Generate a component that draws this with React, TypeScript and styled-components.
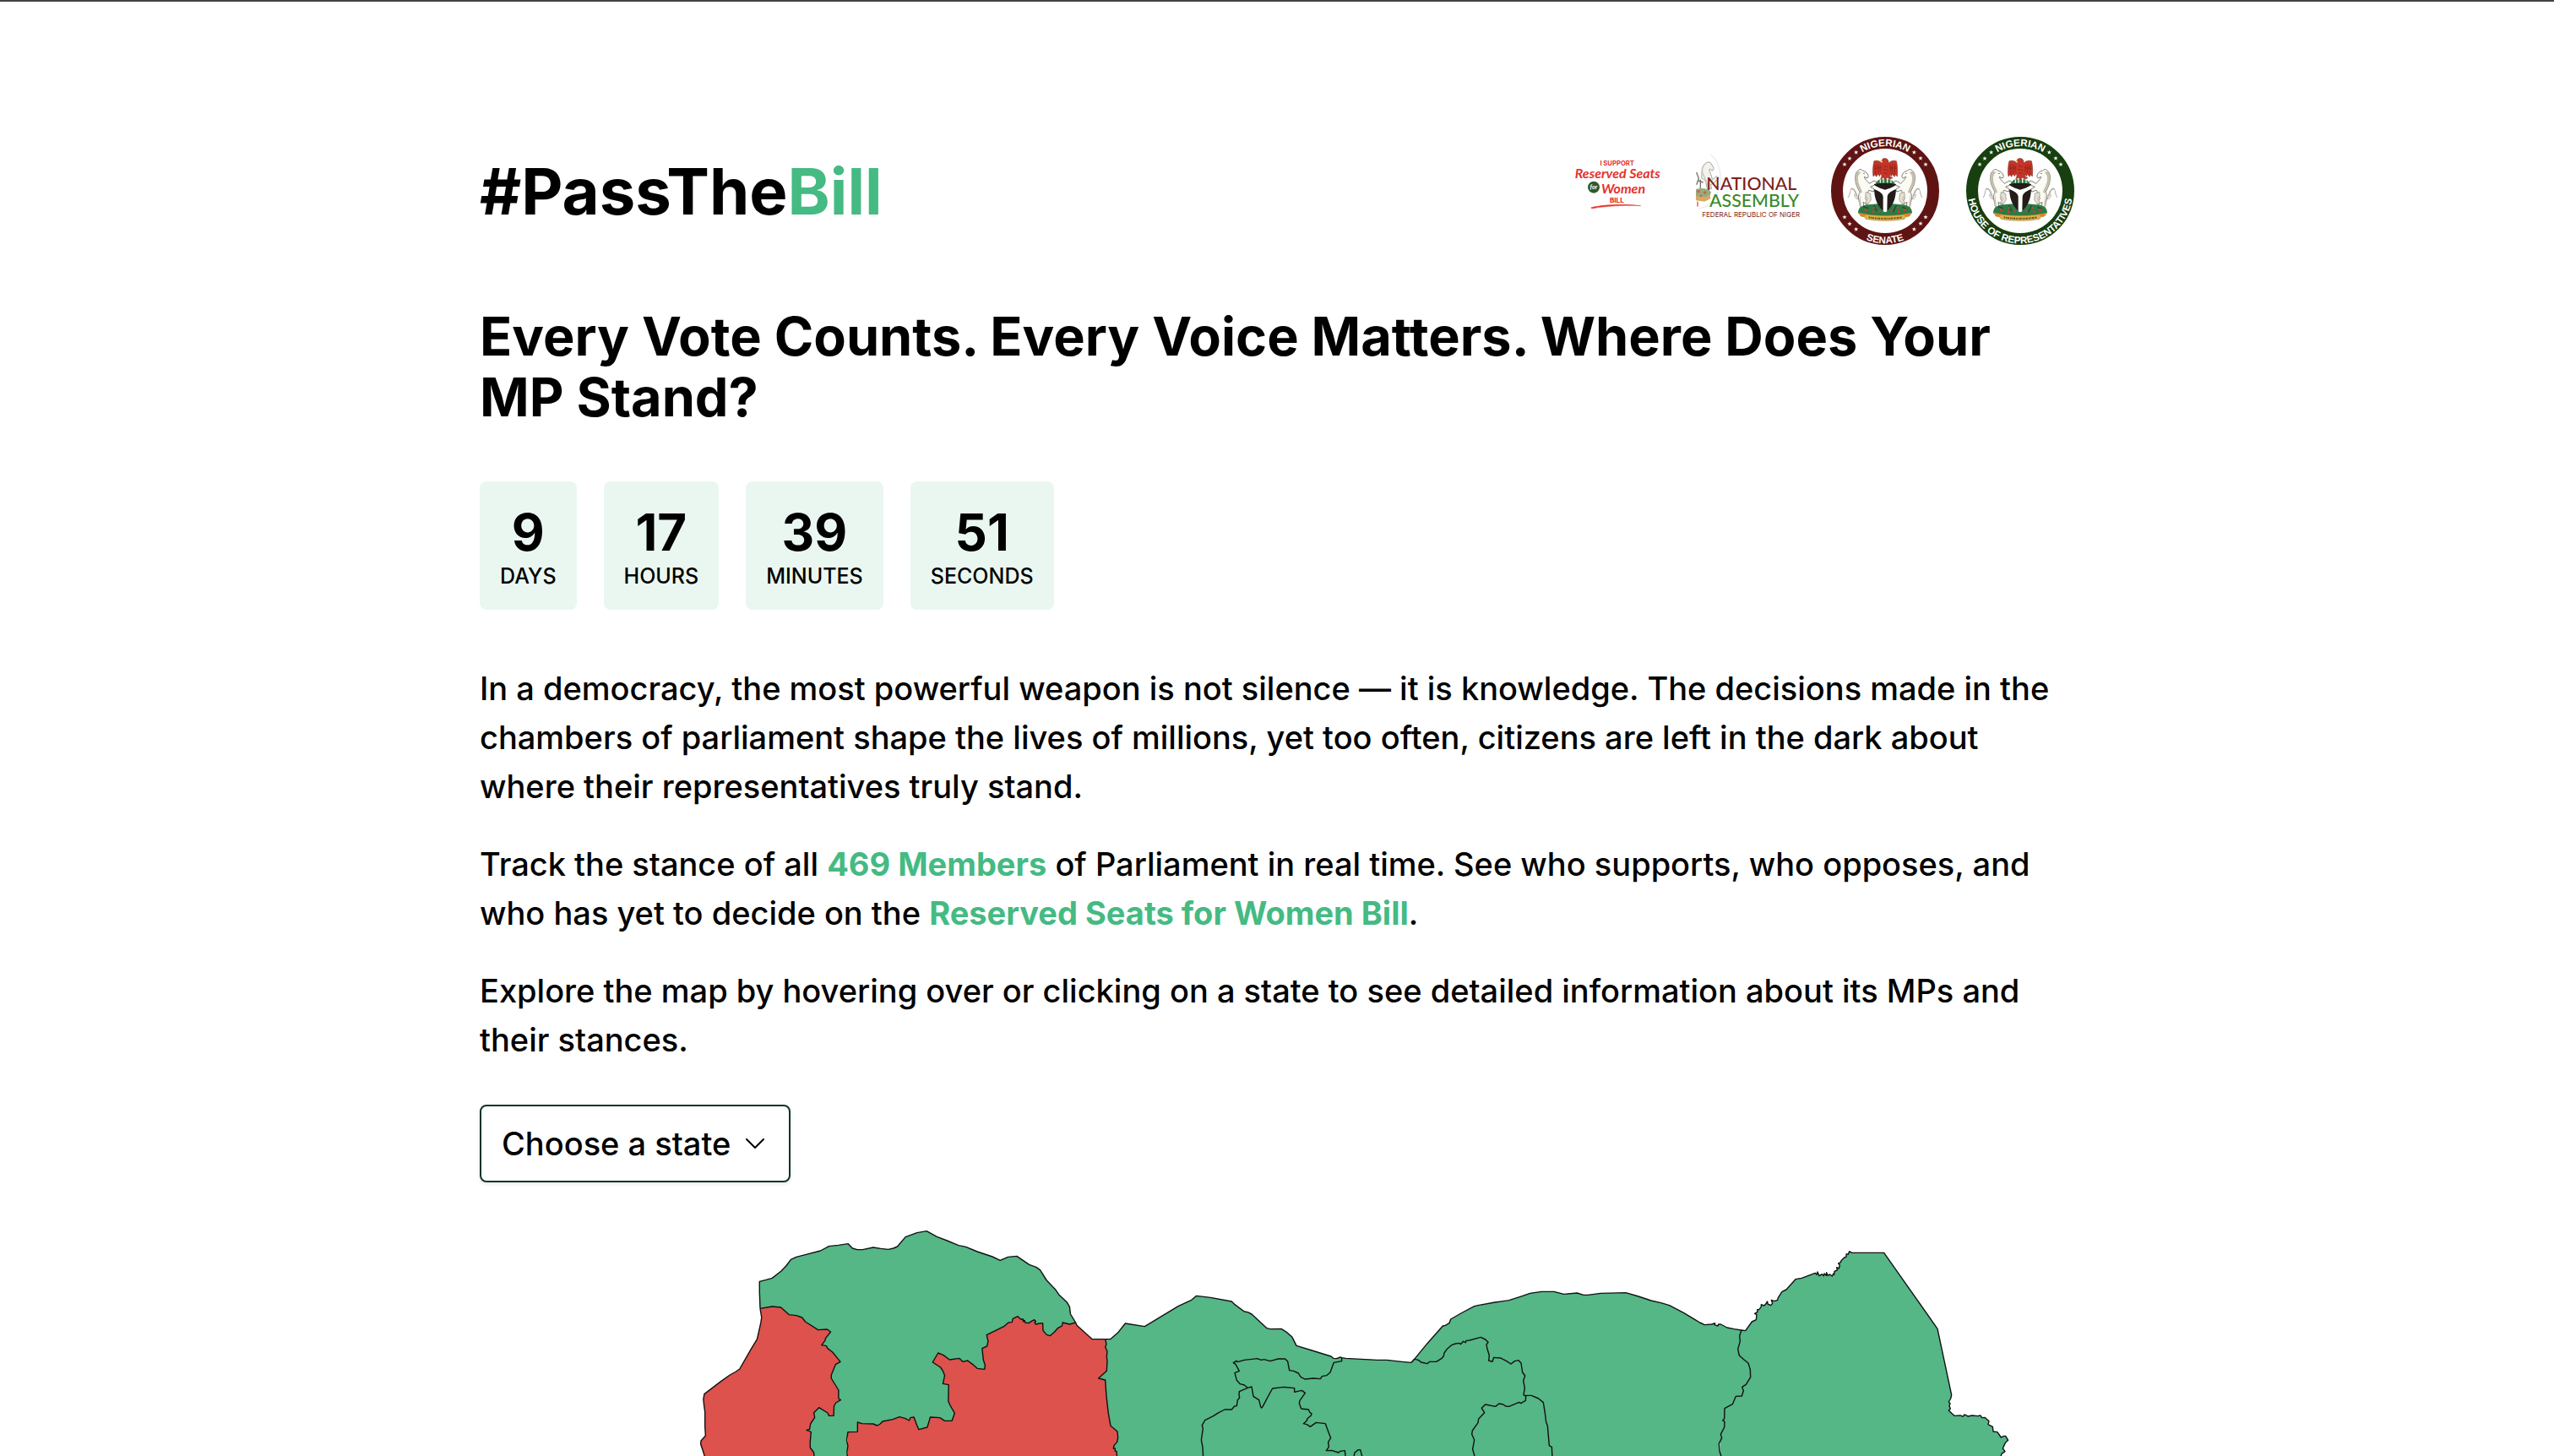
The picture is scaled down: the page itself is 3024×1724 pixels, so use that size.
import React from "react";
import styled, { createGlobalStyle } from "styled-components";

const GREEN = "#45ba83";
const MAP_GREEN = "#55b686";
const MAP_RED = "#dd524c";

const GlobalStyle = createGlobalStyle`
  *, *::before, *::after { box-sizing: border-box; }
  body {
    margin: 0;
    background: #fff;
    color: #000;
    font-family: Inter, "Open Sans", sans-serif;
  }
  h1, h2, p, dl, dt, dd { margin: 0; }
`;

const Page = styled.div`
  border-top: 2px solid #444142;
`;

const Container = styled.main`
  max-width: 2048px;
  margin: 0 auto;
  padding: 160px 80px 0;
`;

const Header = styled.header`
  display: flex;
  align-items: center;
  justify-content: space-between;
  gap: 32px;
`;

const Brand = styled.h1`
  font-size: 76px;
  line-height: 88px;
  font-weight: 700;
`;

const Accent = styled.span`
  color: ${GREEN};
`;

const Logos = styled.div`
  display: flex;
  gap: 32px;
`;

const Logo = styled.svg`
  display: block;
  width: 128px;
  height: 128px;
`;

const Headline = styled.h2`
  margin-top: 72px;
  font-size: 63px;
  line-height: 72px;
  font-weight: 700;
`;

const Countdown = styled.dl`
  display: flex;
  gap: 32px;
  margin-top: 64px;
`;

const Unit = styled.div`
  display: flex;
  flex-direction: column-reverse;
  align-items: center;
  padding: 24px;
  border-radius: 8px;
  background: #eaf7f1;
`;

const UnitValue = styled.dd`
  font-size: 60px;
  line-height: 72px;
  font-weight: 700;
`;

const UnitLabel = styled.dt`
  font-size: 25px;
  line-height: 32px;
  font-weight: 500;
  text-transform: uppercase;
`;

const Copy = styled.section`
  display: flex;
  flex-direction: column;
  gap: 34px;
  margin-top: 64px;
`;

const Paragraph = styled.p`
  font-size: 38px;
  line-height: 58px;
  font-weight: 500;
`;

const Strong = styled.strong`
  color: ${GREEN};
  font-weight: 700;
`;

const SelectBox = styled.div`
  position: relative;
  width: max-content;
  margin-top: 48px;
`;

const Select = styled.select`
  appearance: none;
  display: block;
  height: 92px;
  padding: 0 68px 0 24px;
  border: 2px solid #11332a;
  border-radius: 8px;
  background: #fff;
  box-shadow: 0 2px 4px rgba(0, 0, 0, 0.1);
  color: #000;
  font-family: inherit;
  font-size: 38px;
  font-weight: 500;
`;

const Chevron = styled.svg`
  position: absolute;
  top: 30px;
  right: 26px;
  width: 32px;
  height: 32px;
  pointer-events: none;
`;

const MapDrawing = styled.svg`
  display: block;
  width: 100%;
  margin-top: 40px;

  path {
    stroke: none;
  }
  path.border {
    fill: none;
    stroke: #111;
    stroke-width: 1.4;
    stroke-linejoin: round;
    vector-effect: non-scaling-stroke;
  }
`;

function Star({ x, y }: { x: number; y: number }) {
  return (
    <path
      transform={`translate(${x} ${y})`}
      fill="#fff"
      d="M0-8L2-2.6 8-2.4 3.200 1.300 5 7 0 3.600-5 7-3.200 1.300-8-2.400-2-2.600Z"
    />
  );
}

function Horse() {
  return (
    <g>
      <path
        d="M151 287C136 270 142 250 126 252C119 256 124 268 114 282M151 285C144 290 136 280 138 270M148 278C142 262 138 246 124 250"
        fill="none"
        stroke="#aaa699"
        strokeWidth="3"
      />
      <path
        d="M146 190C152 182 160 178 166 186C176 188 184 194 187 206L183 213L172 208C174 218 184 224 190 232L207 222L216 226L212 236L194 244L208 252L205 261L188 256C184 268 178 276 176 286L186 298L183 308L168 298L173 328L160 333L155 298C149 286 151 272 156 262C149 248 141 236 140 218C139 206 141 196 146 190Z"
        fill="#fbfaf5"
        stroke="#6f6b60"
        strokeWidth="2.600"
      />
      <path
        d="M150 188C139 198 137 214 143 232C148 244 155 252 159 268L165 262C160 246 150 234 150 216C148 206 154 198 160 192ZM158 270C157 286 161 304 164 329L158 329C155 304 152 288 158 270Z"
        fill="#c4bfab"
      />
      <path
        d="M178 262L194 268L196 290L186 304L176 300L184 286L176 276Z"
        fill="#e5e0cf"
        stroke="#8d8979"
        strokeWidth="2"
      />
      <circle cx="171" cy="196" r="2" fill="#222" />
    </g>
  );
}

function CoatOfArms() {
  return (
    <g>
      <Horse />
      <g transform="translate(492 0) scale(-1 1)">
        <Horse />
      </g>
      <path
        d="M150 336C150 314 170 306 196 306C230 302 262 302 296 306C322 306 342 314 342 336C326 346 300 350 246 350C192 350 166 346 150 336Z"
        fill="#2c7a45"
      />
      <path d="M168 314L186 320M206 310L216 330M286 310L274 334M308 316L322 322" stroke="#174f2b" strokeWidth="4" />
      <g fill="#d8392c">
        <circle cx="178" cy="326" r="5" />
        <circle cx="206" cy="318" r="4" />
        <circle cx="204" cy="332" r="4" />
        <circle cx="226" cy="330" r="4" />
        <circle cx="268" cy="330" r="4" />
        <circle cx="290" cy="318" r="4" />
        <circle cx="294" cy="332" r="4" />
        <circle cx="316" cy="326" r="5" />
      </g>
      <path
        d="M152 336L184 342C220 347 272 347 308 342L340 336L332 348L320 350L314 358C276 366 216 366 178 358L172 350L160 348Z"
        fill="#e0b24a"
        stroke="#8a6a1c"
        strokeWidth="1.500"
      />
      <path d="M152 336L180 341L172 350L160 348ZM340 336L312 341L320 350L332 348Z" fill="#d9862c" />
      <path d="M188 352C226 358 268 358 306 352" fill="none" stroke="#6f4f18" strokeWidth="6" strokeDasharray="5 2 3 2 7 3" />
      <path
        d="M218 224C222 216 236 218 246 214C256 218 270 216 274 224L280 234H212Z"
        fill="#2f7d46"
      />
      <path d="M229 218V230M240 216V230M254 216V230M267 218V230" stroke="#f4f1e6" strokeWidth="4" />
      <path
        d="M207 234Q246 226 285 234C286 268 282 310 246 334C210 310 206 268 207 234Z"
        fill="#231c18"
      />
      <path
        d="M207 237C222 248 240 252 246 254C252 252 270 248 285 237L285 252C270 258 257 264 254 278L253 331L246 334L239 331L239 278C236 264 222 258 207 252Z"
        fill="#fff"
      />
      <path
        d="M236 146C242 140 254 141 257 150L259 160C264 152 276 148 286 152C290 166 291 188 289 207L283 200L279 208L272 199L268 206L262 196L264 208L273 212L262 216L254 211L246 217L240 211L230 216L234 206L232 195L226 206L221 198L215 208L210 200L204 207C201 188 203 166 207 152C217 148 229 152 234 160L239 154L233 152Z"
        fill="#c53528"
        stroke="#71180f"
        strokeWidth="1.500"
      />
      <path
        d="M212 164L213 200M220 164L222 196M228 166L229 190M281 164L279 200M273 164L270 196M265 166L264 190M207 178L232 176M286 178L261 176M240 170L254 172M238 182L256 184M240 194L254 196"
        stroke="#7d1c12"
        strokeWidth="2"
        fill="none"
      />
      <path d="M236 149L228 152L237 155Z" fill="#e4b33c" />
    </g>
  );
}

type SealProps = { id: string; title: string; colour: string; lower: string; lowerStars: boolean };

function Seal({ id, title, colour, lower, lowerStars }: SealProps) {
  return (
    <Logo viewBox="54 66 384 384" role="img" aria-label={title}>
      <defs>
        <path id={`${id}-top`} d="M87 258A159 159 0 0 1 405 258" />
        <path id={`${id}-low`} d="M62.500 225A186.500 186.500 0 1 0 429.500 225" />
      </defs>
      <circle cx="246" cy="258" r="171" fill="#fff" stroke={colour} strokeWidth="42" />
      <g
        fill="#fff"
        fontFamily="Liberation Sans, sans-serif"
        fontSize="35"
        fontWeight="700"
        textAnchor="middle"
      >
        <text>
          <textPath href={`#${id}-top`} startOffset="50%">
            NIGERIAN
          </textPath>
        </text>
        <text>
          <textPath href={`#${id}-low`} startOffset="50%">
            {lower}
          </textPath>
        </text>
      </g>
      <Star x={102} y={164} />
      <Star x={120} y={143} />
      <Star x={143} y={121} />
      <Star x={349} y={121} />
      <Star x={372} y={142} />
      <Star x={390} y={164} />
      {lowerStars && (
        <g>
          <Star x={102} y={351} />
          <Star x={120} y={375} />
          <Star x={143} y={394} />
          <Star x={349} y={394} />
          <Star x={372} y={374} />
          <Star x={390} y={351} />
        </g>
      )}
      <CoatOfArms />
    </Logo>
  );
}

function SupportLogo() {
  return (
    <Logo viewBox="24 66 384 384" role="img" aria-label="I support Reserved Seats for Women Bill">
      <g fill="#e5322b" textAnchor="middle">
        <text x="224" y="167" fontFamily="Inter, sans-serif" fontWeight="700" fontSize="23">
          I SUPPORT
        </text>
        <text x="226" y="214" fontFamily="Lato, sans-serif" fontStyle="italic" fontWeight="700" fontSize="48">
          Reserved Seats
        </text>
        <text x="246" y="266" fontFamily="Lato, sans-serif" fontStyle="italic" fontWeight="700" fontSize="48">
          Women
        </text>
        <text x="223" y="299" fontFamily="Inter, sans-serif" fontWeight="800" fontSize="24">
          BILL
        </text>
        <path d="M132 317C180 306 250 304 308 311C250 308 180 312 134 321Z" stroke="#e5322b" strokeWidth="1.500" />
      </g>
      <circle cx="141" cy="245" r="21" fill="#2f5a2c" />
      <text
        x="141"
        y="252"
        fill="#fff"
        fontFamily="Lato, sans-serif"
        fontStyle="italic"
        fontWeight="700"
        fontSize="22"
        textAnchor="middle"
      >
        for
      </text>
    </Logo>
  );
}

function AssemblyLogo() {
  return (
    <Logo viewBox="504 66 384 384" role="img" aria-label="National Assembly, Federal Republic of Nigeria">
      <defs>
        <clipPath id="assembly-clip">
          <rect x="504" y="66" width="369" height="384" />
        </clipPath>
      </defs>
      <path d="M556 128C606 166 606 276 540 314L512 322" fill="none" stroke="#ececec" strokeWidth="4" />
      <path
        d="M526 178C532 160 546 152 556 158L568 178L564 186L552 180C550 192 562 202 562 218L578 206L586 212L566 232L556 236L560 250H544L538 222L524 212Z"
        fill="#f3f2ec"
        stroke="#a9a79d"
        strokeWidth="3"
      />
      <path d="M540 160C524 172 522 192 534 208C538 220 546 232 548 250" fill="none" stroke="#c9c7ba" strokeWidth="4" />
      <path d="M506 192L514 214L506 236M520 218V250M512 222L530 228" fill="none" stroke="#77756b" strokeWidth="4" />
      <path d="M504 252C524 246 548 250 558 262L552 282L534 294L504 290Z" fill="#93ad7c" />
      <path d="M504 276L540 280L552 270L556 286L534 296L504 292Z" fill="#d8a964" />
      <g fill="#d65a4a">
        <circle cx="513" cy="260" r="5" />
        <circle cx="536" cy="264" r="5" />
        <circle cx="522" cy="276" r="4" />
        <rect x="508" y="296" width="4" height="18" />
      </g>
      <g fontFamily="Lato, sans-serif" fill="#7d1f1b">
        <text x="541" y="254" fontSize="64" fontWeight="500">
          NATIONAL
        </text>
        <text x="552" y="315" fontSize="64" fontWeight="500" fill="#3a8a2b">
          ASSEMBLY
        </text>
        <text x="526" y="350" fontSize="24" fontFamily="Inter, sans-serif" clipPath="url(#assembly-clip)">
          FEDERAL REPUBLIC OF NIGERIA
        </text>
      </g>
    </Logo>
  );
}

const KEBBI_WEST =
  "M280 358L285 390 282 410 270 467 250 502 212 573 200 582 180 594 150 617 95 662 92 680 94 702 97 725 97 775 99 810 84 828 83 840 90 862 98 890";
const SOKOTO_NORTH =
  "M280 358L278 300 278 262 300 256 320 250 350 225 366 207 382 184 400 175 430 167 480 153 508 137 540 133 572 128 586 144 602 149 620 149 655 141 680 145 705 148 722 144 735 138 762 104 800 89 832 83 866 103 900 117 938 134 962 139 1000 156 1050 174 1076 187 1102 175 1131 172 1172 202 1195 211 1208 221 1230 258 1260 292 1270 308 1298 337 1306 352 1309 378 1326 408";
const SOKOTO_ZAMFARA =
  "L1306 414 1283 408 1281 420 1268 427 1254 443 1241 455 1230 451 1218 436 1217 410 1208 411 1194 414 1190 408 1194 404 1189 398 1180 403 1170 410 1158 408 1157 400 1152 404 1152 396 1144 396 1134 386 1118 394 1115 407 1103 408 1088 422 1031 452 1036 475 1032 492 1016 500 1020 540 1026 560 1024 574 1000 571 984 556 968 543 952 547 940 535 908 540 888 524 870 516 852 549 878 567 886 580 892 596 886 625 905 629 904 688 910 702 925 730 916 757 892 757 876 746 844 744 840 760 834 780 806 788 798 768 790 744 778 746 774 756 760 748 742 743 720 752 686 759 678 768 668 774 655 768 618 767 603 762 603 796 571 797 567 826 571 846 568 868 570 890";
const SOKOTO_KEBBI =
  "L458 870 446 852 446 830 449 797 440 792 434 790 444 787 447 768 461 745 458 728 475 710 504 729 508 739 524 739 525 705 531 693 547 683 540 678 540 648 516 606 516 594 530 557 546 547 520 513 503 499 500 491 484 488 495 472 497 464 514 441 502 432 472 434 430 405 419 390 400 383 376 380 349 354 320 351 280 358";
const ZAMFARA_NORTH = "M1326 408L1330 418 1381 467 1424 467";

const KATSINA_NORTH =
  "M86 257L104 257 130 235 157 201 226 212 345 140 392 118 410 103 460 109 535 123 545 133 580 159 592 161 606 168 660 218 672 221 711 220 730 232 750 250 765 280 820 297 888 318 896 325 907 326 921 321 926 323 940 325 1052 331 1086 331 1140 337 1173 340 1184 328";
const KATSINA_WEST =
  "M86 257L90 275 86 285 93 300 91 320 93 335 91 370 62 396 86 402 90 460 97 520 105 565 129 585 131 608 128 622 117 635 115 645 121 645 121 655 126 655 128 675 130 690";
const KANO_NORTH =
  "M926 323L926 335 898 340 885 375 872 386 856 389 850 398 825 396 795 399 780 391 772 378 755 370 740 368 734 336 725 327 700 327 672 335 650 329 640 331 626 326 580 331 556 338 552 334 541 341 549 346 562 370 546 377 553 403 565 416 580 420 592 430";
const KANO_SOUTH =
  "M592 430L606 426 612 460 632 473 638 497 641 501 645 497 670 450 680 432 720 427 758 431 758 445 770 442 784 439 796 448 777 475 775 485 782 504 808 507 813 518 819 521 817 528 803 540 803 545 790 557 802 560 814 568 835 553 868 557 880 590 887 608 878 622 880 640 871 653 890 652 915 660 920 655 937 653 940 680";
const KADUNA_NORTH =
  "M592 430L562 443 561 455 563 465 556 473 553 494 545 495 535 507 510 507 485 520 470 530 440 545 430 563 433 575 427 615 432 640 434 680M968 680L972 660 985 650 992 650 999 676";

const YOBE_NORTH =
  "M94 400L104 388 150 332 205 270 214 268 228 260 233 246 275 222 317 200 330 197 390 186 440 179 480 166 515 154 555 148 600 148 635 157 682 153 705 160 720 160 765 154 855 152 900 165 945 180 980 188 1010 197 1060 223 1100 247 1118 258 1135 266 1160 264 1172 260 1170 266 1182 270 1184 264 1192 264 1215 276 1240 281 1265 285 1280 287";
const BORNO_WEST =
  "L1266 285 1259 305 1261 325 1253 352 1258 375 1275 390 1290 402 1297 425 1298 452 1282 478 1268 487 1273 500 1267 519 1246 520 1234 548 1206 563 1205 600 1199 605 1206 610 1205 630 1192 655 1196 668 1186 688 1188 715 1196 740";
const JIGAWA =
  "M104 388L118 391 128 399 150 404 158 397 182 397 200 386 208 377 210 366 220 352 236 338 250 333 265 331 268 335 278 325 286 329 288 322 300 321 340 310 356 318 366 328 360 336 362 348 370 375 368 393 381 397 386 382 410 384 430 394 447 405 460 395 474 392 483 402 488 435 497 447 491 465 496 490 492 515 500 520 499 535 482 545 476 541 440 556 428 555 420 549 405 546 392 556 356 549 343 562 353 578 340 592 332 600 330 614 310 642 308 655 317 675 311 708 320 740M496 517L520 517 545 528 562 542 568 580 572 612 577 625 583 695 592 700 594 740";

const BORNO =
  "M140 347L163 315 178 308 180 290 173 286 183 280 182 272 188 272 196 262 196 254 206 258 212 252 218 243 219 252 230 257 236 250 232 238 242 242 254 238 256 230 270 208 285 201 318 164 340 160 388 142 393 148 396 138 402 152 412 146 418 152 420 144 427 151 428 140 432 151 440 147 448 153 452 145 455 148 456 136 466 132 464 122 472 126 475 114 470 108 478 104 480 98 492 86 497 86 499 74 505 76 509 65 518 70 632 70 822 340 872 575 869 588 862 600 867 605 864 614 868 624 862 630 872 640 882 649 905 648 912 652 918 645 930 651 945 648 965 650 975 648 980 656 990 655 1005 668 1002 680 1018 688 1020 705 1035 707 1048 726 1058 721 1064 721 1073 736 1064 744 1060 752 1054 765 1062 776 1050 784 1047 796";

function StateMap() {
  const sokoto = SOKOTO_NORTH + SOKOTO_ZAMFARA + "L460 890" + SOKOTO_KEBBI;
  return (
    <MapDrawing viewBox="568 1440 1888 284" role="img" aria-label="Map of Nigerian states by stance">
      <g transform="translate(800 1430) scale(.35714 .33333)">
        <path fill={MAP_RED} d={KEBBI_WEST + "L460 890" + SOKOTO_KEBBI + "Z"} />
        <path fill={MAP_RED} d={ZAMFARA_NORTH + "L1440 500 1480 890 570 890 570 350 1134 370Z"} />
        <path fill={MAP_GREEN} d={sokoto + "Z"} />
        <path className="border" d={KEBBI_WEST} />
        <path className="border" d={sokoto} />
        <path className="border" d={ZAMFARA_NORTH} />
      </g>
      <g transform="translate(1280 1500) scale(.33333)">
        <path
          fill={MAP_GREEN}
          d={KATSINA_NORTH + "V690H130" + "L128 675 126 655 121 655 121 645 115 645 117 635 128 622 131 608 129 585 105 565 97 520 90 460 86 402 62 396 91 370 93 335 91 320 93 300 86 285 90 275Z"}
        />
        <path className="border" d={KATSINA_NORTH} />
        <path className="border" d={KATSINA_WEST} />
        <path className="border" d={KANO_NORTH} />
        <path className="border" d={KANO_SOUTH} />
        <path className="border" d={KADUNA_NORTH} />
      </g>
      <g transform="translate(2020 1460) scale(.33333)">
        <path fill={MAP_GREEN} d={BORNO + "H50V600L120 347Z"} />
        <path className="border" d={BORNO} />
      </g>
      <g transform="translate(1640 1480) scale(.33333)">
        <path fill={MAP_GREEN} d={YOBE_NORTH + BORNO_WEST + "H94Z"} />
        <path className="border" d={YOBE_NORTH + BORNO_WEST} />
        <path className="border" d={JIGAWA} />
      </g>
    </MapDrawing>
  );
}

const COUNTDOWN = [
  { label: "Days", value: 9 },
  { label: "Hours", value: 17 },
  { label: "Minutes", value: 39 },
  { label: "Seconds", value: 51 },
];

export default function App() {
  return (
    <Page>
      <GlobalStyle />
      <Container>
        <Header>
          <Brand>
            #PassThe<Accent>Bill</Accent>
          </Brand>
          <Logos>
            <SupportLogo />
            <AssemblyLogo />
            <Seal id="senate" title="Nigerian Senate" colour="#5f1413" lower="SENATE" lowerStars />
            <Seal
              id="house"
              title="Nigerian House of Representatives"
              colour="#173f0f"
              lower="HOUSE OF REPRESENTATIVES"
              lowerStars={false}
            />
          </Logos>
        </Header>
        <Headline>Every Vote Counts. Every Voice Matters. Where Does Your MP Stand?</Headline>
        <Countdown>
          {COUNTDOWN.map((unit) => (
            <Unit key={unit.label}>
              <UnitLabel>{unit.label}</UnitLabel>
              <UnitValue>{unit.value}</UnitValue>
            </Unit>
          ))}
        </Countdown>
        <Copy>
          <Paragraph>
            In a democracy, the most powerful weapon is not silence — it is knowledge. The decisions made in the
            chambers of parliament shape the lives of millions, yet too often, citizens are left in the dark about
            where their representatives truly stand.
          </Paragraph>
          <Paragraph>
            Track the stance of all <Strong>469 Members</Strong> of Parliament in real time. See who supports, who
            opposes, and who has yet to decide on the <Strong>Reserved Seats for Women Bill</Strong>.
          </Paragraph>
          <Paragraph>
            Explore the map by hovering over or clicking on a state to see detailed information about its MPs and
            their stances.
          </Paragraph>
        </Copy>
        <SelectBox>
          <Select aria-label="Choose a state" defaultValue="">
            <option value="">Choose a state</option>
          </Select>
          <Chevron viewBox="0 0 32 32" fill="none" stroke="#000" strokeWidth="2" strokeLinecap="round" strokeLinejoin="round">
            <path d="M6 11L16 21L26 11" />
          </Chevron>
        </SelectBox>
        <StateMap />
      </Container>
    </Page>
  );
}
